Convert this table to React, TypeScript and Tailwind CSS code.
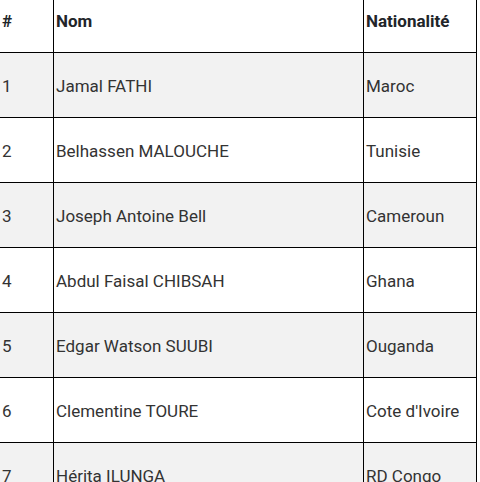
const rows = [
  { id: 1, nom: "Jamal FATHI", nat: "Maroc" },
  { id: 2, nom: "Belhassen MALOUCHE", nat: "Tunisie" },
  { id: 3, nom: "Joseph Antoine Bell", nat: "Cameroun" },
  { id: 4, nom: "Abdul Faisal CHIBSAH", nat: "Ghana" },
  { id: 5, nom: "Edgar Watson SUUBI", nat: "Ouganda" },
  { id: 6, nom: "Clementine TOURE", nat: "Cote d'Ivoire" },
  { id: 7, nom: "Hérita ILUNGA", nat: "RD Congo" },
  { id: 8, nom: "Stephen KESHI", nat: "Nigeria" },
];

export default function App() {
  return (
    <div className="w-[480px] h-[482px] overflow-hidden bg-white font-['Roboto',sans-serif] text-[17px]">
      <table className="border-collapse table-fixed w-[477px] -ml-px -mt-[13px]">
        <colgroup>
          <col className="w-[54px]" />
          <col className="w-[310px]" />
          <col className="w-[113px]" />
        </colgroup>
        <thead>
          <tr className="h-[65px] bg-white">
            <th className="border border-black text-left align-middle pl-[2px] pt-[3px] font-bold text-[#212529]">#</th>
            <th className="border border-black text-left align-middle pl-[2px] pt-[3px] font-bold text-[#212529]">Nom</th>
            <th className="border border-black text-left align-middle pl-[2px] pt-[3px] font-bold text-[#212529]">Nationalité</th>
          </tr>
        </thead>
        <tbody>
          {rows.map((r) => (
            <tr key={r.id} className={`h-[65px] ${r.id % 2 === 1 ? "bg-[#f2f2f2]" : "bg-white"}`}>
              <td className="border border-black align-middle pl-[2px] pt-[3px] text-[#333333]">{r.id}</td>
              <td className="border border-black align-middle pl-[2px] pt-[3px] text-[#333333]">{r.nom}</td>
              <td className="border border-black align-middle pl-[2px] pt-[3px] text-[#333333]">{r.nat}</td>
            </tr>
          ))}
        </tbody>
      </table>
    </div>
  );
}
